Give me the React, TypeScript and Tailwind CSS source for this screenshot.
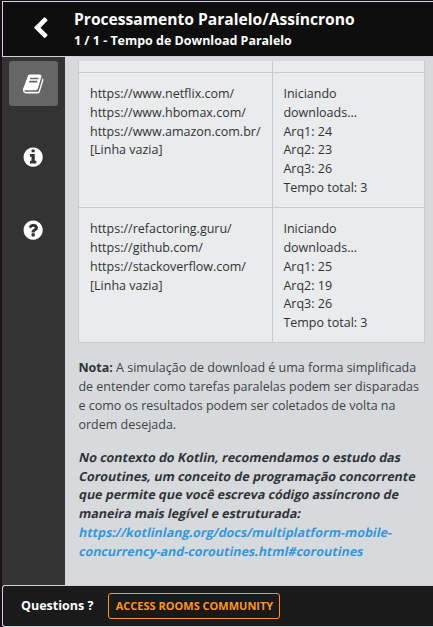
import React from "react";

const CIRCLE =
  "M1664 896q0 209-103 385.5t-279.500 279.500-385.500 103-385.500-103-279.500-279.500-103-385.500 103-385.500 279.500-279.500 385.500-103 385.500 103 279.500 279.500 103 385.500z";

const icons = {
  back: "M1427 301l-531 531 531 531q19 19 19 45t-19 45l-166 166q-19 19-45 19t-45-19l-742-742q-19-19-19-45t19-45l742-742q19-19 45-19t45 19l166 166q19 19 19 45t-19 45z",
  book: "M1639 478q40 57 18 129l-275 906q-19 64-76.500 107.500t-122.500 43.500h-923q-77 0-148.500-53.500t-99.500-131.500q-24-67-2-127 0-4 3-27t4-37q1-8-3-21.500t-3-19.500q2-11 8-21t16.500-23.500 16.500-23.500q23-38 45-91.500t30-91.500q3-10 .5-30t-.5-28q3-11 17-28t17-23q21-36 42-92t25-90q1-9-2.500-32t.5-28q4-13 22-30.500t22-22.500q19-26 42.500-84.500t27.500-96.500q1-8-3-25.500t-2-26.500q2-8 9-18t18-23 17-21q8-12 16.500-30.500t15-35 16-36 19.500-32 26.500-23.500 36-11.500 47.500 5.500l-1 3q38-9 51-9h761q74 0 114 56t18 130l-274 906q-36 119-71.500 153.500t-128.500 34.500h-869q-27 0-38 15-11 16-1 43 24 70 144 70h923q29 0 56-15.500t35-41.500l300-987q7-22 5-57 38 15 59 43zm-1064 2q-4 13 2 22.500t20 9.500h608q13 0 25.500-9.500t16.500-22.500l21-64q4-13-2-22.500t-20-9.500h-608q-13 0-25.500 9.500t-16.500 22.500zm-83 256q-4 13 2 22.500t20 9.500h608q13 0 25.500-9.500t16.500-22.500l21-64q4-13-2-22.500t-20-9.500h-608q-13 0-25.500 9.500t-16.500 22.500z",
  info:
    "M1152 1376v-160q0-14-9-23t-23-9h-96v-512q0-14-9-23t-23-9h-320q-14 0-23 9t-9 23v160q0 14 9 23t23 9h96v320h-96q-14 0-23 9t-9 23v160q0 14 9 23t23 9h448q14 0 23-9t9-23zm-128-896v-160q0-14-9-23t-23-9h-192q-14 0-23 9t-9 23v160q0 14 9 23t23 9h192q14 0 23-9t9-23z" +
    CIRCLE,
  help:
    "M1024 1376v-192q0-14-9-23t-23-9h-192q-14 0-23 9t-9 23v192q0 14 9 23t23 9h192q14 0 23-9t9-23zm256-672q0-88-55.500-163t-138.500-116-170-41q-243 0-371 213-15 24 8 42l132 100q7 6 19 6 16 0 25-12 53-68 86-92 34-24 86-24 48 0 85.500 26t37.500 59q0 38-20 61t-68 45q-63 28-115.500 86.500t-52.500 125.500v36q0 14 9 23t23 9h192q14 0 23-9t9-23q0-19 21.500-49.500t54.500-49.500q32-18 49-28.500t46-35 44.500-48 28-60.500 12.500-81z" +
    CIRCLE,
};

function Icon({ name, className }: { name: keyof typeof icons; className: string }) {
  return (
    <svg viewBox="0 0 1792 1792" className={className} fill="currentColor" fillRule="evenodd">
      <path d={icons[name]} />
    </svg>
  );
}

const rows = [
  {
    input: ["https://www.netflix.com/", "https://www.hbomax.com/", "https://www.amazon.com.br/", "[Linha vazia]"],
    output: ["Iniciando", "downloads...", "Arq1: 24", "Arq2: 23", "Arq3: 26", "Tempo total: 3"],
  },
  {
    input: ["https://refactoring.guru/", "https://github.com/", "https://stackoverflow.com/", "[Linha vazia]"],
    output: ["Iniciando", "downloads...", "Arq1: 25", "Arq2: 19", "Arq3: 26", "Tempo total: 3"],
  },
];

const context = [
  "No contexto do Kotlin, recomendamos o estudo das",
  "Coroutines, um conceito de programação concorrente",
  "que permite que você escreva código assíncrono de",
  "maneira mais legível e estruturada:",
];

const link = ["https://kotlinlang.org/docs/multiplatform-mobile-", "concurrency-and-coroutines.html#coroutines"];

function Slanted({ lines }: { lines: string[] }) {
  return (
    <>
      {lines.map((line) => (
        <span key={line} className="block -skew-x-12">
          {line}
        </span>
      ))}
    </>
  );
}

function Cell({ lines }: { lines: string[] }) {
  return (
    <div className="pt-[12.16px]">
      {lines.map((line) => (
        <div key={line}>{line}</div>
      ))}
    </div>
  );
}

export default function App() {
  return (
    <div className="flex h-[627px] w-[433px] flex-col overflow-hidden bg-[#1c0f17] pt-px pl-[2px] font-['Open_Sans',sans-serif] whitespace-nowrap">
      <header className="flex h-14 shrink-0 border-y border-l border-[#ced3d9] bg-[#0e0e0e] text-white">
        <div className="w-[71px] shrink-0 pt-[15px] pl-[26px]">
          <Icon name="back" className="size-[23px]" />
        </div>
        <div className="pt-[6px] font-bold">
          <h1 className="text-[15.62px] leading-[22px]">Processamento Paralelo/Assíncrono</h1>
          <h2 className="pt-px text-[12.48px] leading-5">1 / 1 - Tempo de Download Paralelo</h2>
        </div>
      </header>

      <div className="flex h-[528px] shrink-0">
        <nav className="flex w-[63px] shrink-0 flex-col bg-[#333333] pt-1 pl-[7px] text-white">
          <div className="flex h-[45px] w-[49px] items-center justify-center rounded-[3px] bg-[#666666]">
            <Icon name="book" className="size-[22px]" />
          </div>
          <Icon name="info" className="mt-10 ml-[13.4px] size-[22.3px]" />
          <Icon name="help" className="mt-[50.8px] ml-[13.4px] size-[22.3px]" />
        </nav>

        <main className="flex-1 bg-[#d7dadd] pt-1 pl-[13px] text-[12.5px] leading-[18.75px] text-[#2f3337]">
          <div className="w-[347px] border-x border-[#c7cbd0] bg-[#eaebed]">
            <div className="grid h-3 grid-cols-[194px_1fr] border-b border-[#c7cbd0]">
              <div className="border-r border-[#c7cbd0]" />
            </div>
            {rows.map((row) => (
              <div key={row.input[0]} className="grid h-[135.24px] grid-cols-[194px_1fr] border-b border-[#c7cbd0]">
                <div className="border-r border-[#c7cbd0] pl-[11px]">
                  <Cell lines={row.input} />
                </div>
                <div className="pl-[10.4px]">
                  <Cell lines={row.output} />
                </div>
              </div>
            ))}
          </div>

          <p className="mt-[15.87px] pl-[0.4px] text-[#3f4347]">
            <b className="text-[#2f3337]">Nota:</b> A simulação de download é uma forma simplificada
            <br />
            de entender como tarefas paralelas podem ser disparadas
            <br />
            e como os resultados podem ser coletados de volta na
            <br />
            ordem desejada.
          </p>
          <p className="mt-[14.65px] pl-[0.8px] font-bold">
            <Slanted lines={context} />
            <a className="text-[#3498db]">
              <Slanted lines={link} />
            </a>
          </p>
        </main>
      </div>

      <footer className="flex h-[42px] shrink-0 items-center rounded-l-[3px] border-y border-l border-[#ced3d9] bg-[#1a1a1a] pl-[18px]">
        <span className="w-[87px] pt-px text-[12.5px] font-bold text-white">Questions ?</span>
        <button className="h-[26px] w-[172px] rounded-[3px] border border-[#ff9522] pl-px text-[11px] font-bold text-[#ff9522]">
          ACCESS ROOMS COMMUNITY
        </button>
      </footer>
    </div>
  );
}
